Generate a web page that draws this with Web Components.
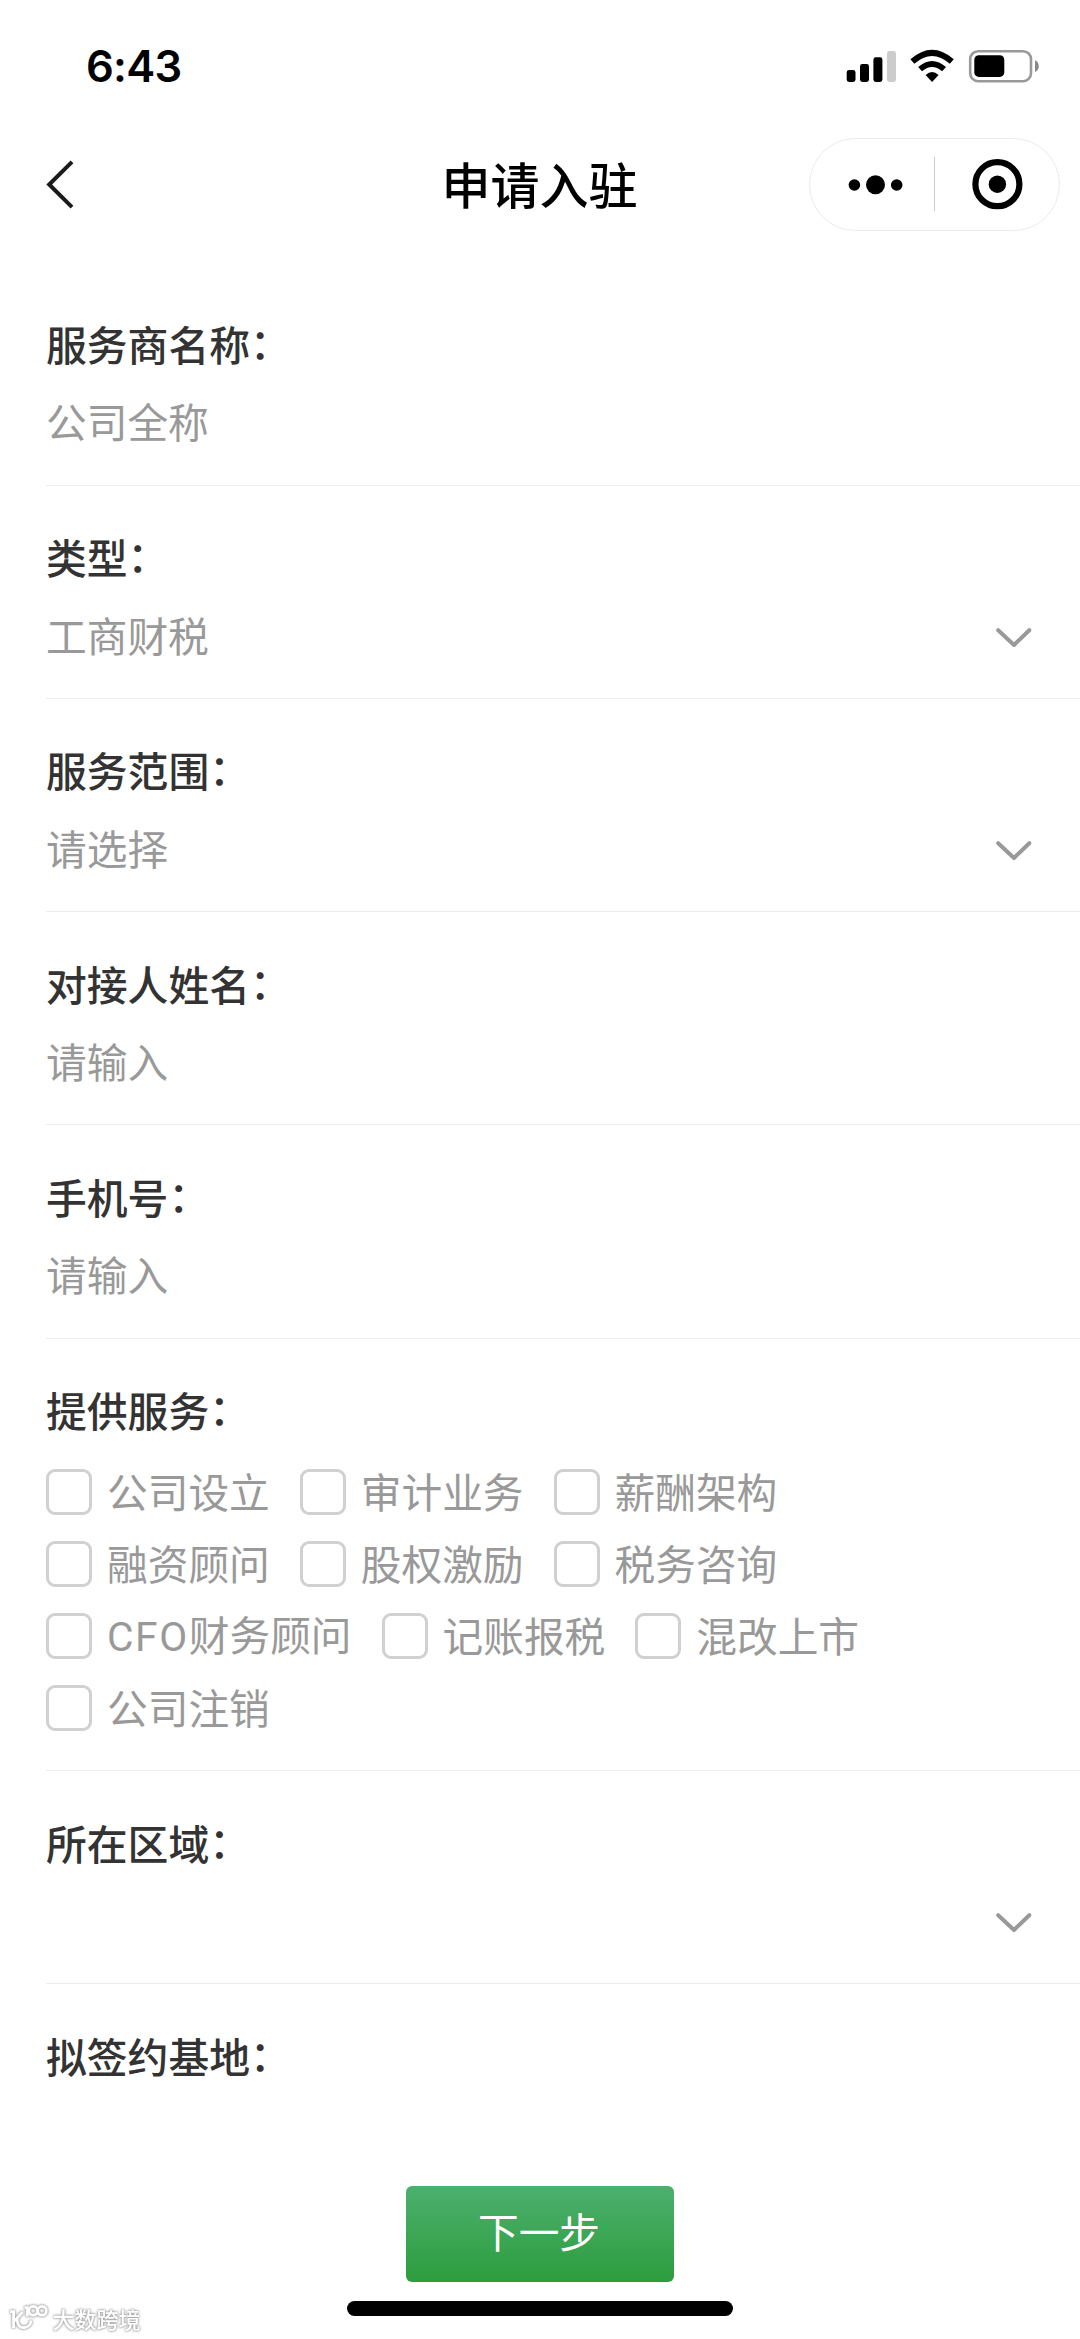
<!DOCTYPE html>
<html lang="zh-CN">
<head>
<meta charset="utf-8">
<title>申请入驻</title>
<style>
html,body{margin:0;padding:0;background:#fff}
body{width:1080px;height:2339px;overflow:hidden;font-family:"Noto Sans CJK SC",sans-serif}
</style>
</head>
<body>
<apply-page></apply-page>
<script>
const define = (name, html) => {
  const t = document.createElement('template');
  t.innerHTML = html;
  customElements.define(name, class extends HTMLElement {
    constructor() {
      super();
      this.attachShadow({mode: 'open'}).appendChild(t.content.cloneNode(true));
    }
  });
};

define('status-bar', `
<style>
:host{display:flex;justify-content:space-between;align-items:center;height:131px;box-sizing:border-box;padding:1px 40px 0 86px}
.time{font:600 43.5px/60px Inter,sans-serif;color:#000;letter-spacing:-.7px}
svg{display:block}
</style>
<span class="time">6:43</span>
<svg width="194" height="34" viewBox="846 49 194 34">
  <rect x="846.7" y="70" width="8.8" height="12" rx="2.4"/>
  <rect x="860" y="64" width="9" height="18" rx="2.4"/>
  <rect x="873.4" y="57.3" width="9" height="24.7" rx="2.4"/>
  <rect x="887" y="51" width="9" height="31" rx="2.4" fill="#ccc"/>
  <path d="M912.4 61.6Q932.1 44.2 951.8 61.6" fill="none" stroke="#000" stroke-width="6"/>
  <path d="M920.1 69.2Q932.1 58.6 944.1 69.2" fill="none" stroke="#000" stroke-width="5.8"/>
  <path d="M925.6 75Q932.1 69 938.6 75L932.1 82Z"/>
  <rect x="970.2" y="51.2" width="60.8" height="30" rx="8" fill="none" stroke="#999" stroke-width="2.6"/>
  <rect x="974.3" y="55.3" width="30" height="21.6" rx="4.5"/>
  <path d="M1035 60.3Q1038.7 62 1038.7 66.2T1035 72Z" fill="#888"/>
</svg>`);

define('menu-capsule', `
<style>
:host{display:block;width:251px;height:93px}
svg{display:block}
</style>
<svg width="251" height="93" viewBox="809 138 251 93">
  <rect x="809.5" y="138.5" width="250" height="92" rx="46" fill="#fff" stroke="#ebebeb"/>
  <circle cx="854.4" cy="185" r="5.8"/><circle cx="875.5" cy="184.8" r="9.5"/><circle cx="896.7" cy="185" r="5.8"/>
  <path d="M934.5 157V211" stroke="#ccc"/>
  <circle cx="997.4" cy="184.2" r="22" fill="none" stroke="#000" stroke-width="6.2"/>
  <circle cx="997.4" cy="184.2" r="8.7"/>
</svg>`);

define('nav-bar', `
<style>
:host{display:grid;grid-template-columns:1fr auto 1fr;align-items:center;height:106px;padding:0 20px 0 46px;box-sizing:border-box}
.back{display:block}
.title{font-size:49px;line-height:70px;font-weight:500;color:#000;margin:-3px -26px 0 0;transform:translateX(-26.5px)}
menu-capsule{justify-self:end}
</style>
<svg class="back" width="30" height="52" viewBox="46 158 30 52"><path d="M72 161.8L49.2 184.5L72 207.2" fill="none" stroke="#1a1a1a" stroke-width="4"/></svg>
<span class="title"><slot></slot></span>
<menu-capsule></menu-capsule>`);

define('form-field', `
<style>
:host{display:flex;flex-direction:column;height:213.2px;box-sizing:border-box;margin-left:46px;padding-top:41.5px;border-bottom:1.5px solid #ececec;color:#999}
:host([tall]){height:432.7px}
:host([last]){flex:1;border:0;height:auto}
.label{font-size:40.8px;line-height:60px;font-weight:500;color:#333;white-space:nowrap}
.colon{display:inline-block;transform:translate(0,-2px)}
.value{display:flex;align-items:center;justify-content:space-between;min-height:60px;margin-top:19.5px;padding-right:47px;font-size:40.7px;line-height:60px}
.text{margin-top:-4.5px}
:host([tall]) .value{margin-top:29px}
:host([tall]) .text{margin:0}
svg{display:none;margin-top:2px}
:host([select]) svg{display:block}
</style>
<div class="label"><slot name="label"></slot><span class="colon">：</span></div>
<div class="value"><span class="text"><slot></slot></span>
<svg width="38" height="24" viewBox="995 626 38 24"><path d="M998.2 630.2L1014 645L1029.3 630.2" fill="none" stroke="#999" stroke-width="4" stroke-linecap="round" stroke-linejoin="round"/></svg></div>`);

define('check-item', `
<style>
:host{display:flex;align-items:center;height:46px;gap:15px;white-space:nowrap}
i{width:46px;height:46px;box-sizing:border-box;border:3px solid #d0d0d0;border-radius:9px}
span{font-size:40.7px;line-height:46px;margin-top:-3px}
</style><i></i><span><slot></slot></span>`);

define('check-group', `
<style>
:host{display:flex;flex-direction:column;gap:26px}
::slotted(div){display:flex;gap:30px}
</style><slot></slot>`);

define('submit-bar', `
<style>
:host{display:flex;flex-direction:column;align-items:center;height:153px;gap:19.5px}
button{width:268px;height:95.5px;border:0;padding:0 2px 5.5px 0;border-radius:6px;background:linear-gradient(#4cb06e,#2c9d3e);color:#fff;font:400 40.7px/60px "Noto Sans CJK SC",sans-serif}
.home{width:386px;height:14.5px;border-radius:8px;background:#000}
</style>
<button><slot></slot></button><div class="home"></div>`);

define('water-mark', `
<style>
:host{position:absolute;left:8px;bottom:6px;display:flex;align-items:center;gap:3.5px;color:#fff;filter:drop-shadow(0 0 1px #999) drop-shadow(0 0 1px #bbb)}
span{font-size:22px;line-height:30px;font-weight:500}
</style>
<svg width="41" height="28" viewBox="8 2304 41 28" fill="none" stroke="#fff" stroke-width="2.8">
<path d="M10 2311.6H13.6V2328M22.6 2312L14.5 2321M17 2319Q17.5 2328.3 24.5 2327.6Q30.5 2326.5 31 2320.5M24.5 2307.6H27.3V2316.5"/><circle cx="33.2" cy="2310.8" r="4.4"/><circle cx="42" cy="2310.8" r="4.4"/></svg>
<span>大数跨境</span>`);

define('apply-page', `
<style>
:host{display:flex;flex-direction:column;position:relative;width:1080px;height:2339px;background:#fff;overflow:hidden}
main{display:flex;flex-direction:column;flex:1;padding-top:35.6px}
.latin{font-family:Roboto,sans-serif;line-height:1;letter-spacing:1.6px}
</style>
<status-bar></status-bar>
<nav-bar>申请入驻</nav-bar>
<main>
<form-field><span slot="label">服务商名称</span>公司全称</form-field>
<form-field select><span slot="label">类型</span>工商财税</form-field>
<form-field select><span slot="label">服务范围</span>请选择</form-field>
<form-field><span slot="label">对接人姓名</span>请输入</form-field>
<form-field><span slot="label">手机号</span>请输入</form-field>
<form-field tall><span slot="label">提供服务</span><check-group>
<div><check-item>公司设立</check-item><check-item>审计业务</check-item><check-item>薪酬架构</check-item></div>
<div><check-item>融资顾问</check-item><check-item>股权激励</check-item><check-item>税务咨询</check-item></div>
<div><check-item><span class="latin">CFO</span>财务顾问</check-item><check-item>记账报税</check-item><check-item>混改上市</check-item></div>
<div><check-item>公司注销</check-item></div></check-group></form-field>
<form-field select><span slot="label">所在区域</span></form-field>
<form-field last><span slot="label">拟签约基地</span></form-field>
</main>
<submit-bar>下一步</submit-bar>
<water-mark></water-mark>`);
</script>
</body>
</html>
